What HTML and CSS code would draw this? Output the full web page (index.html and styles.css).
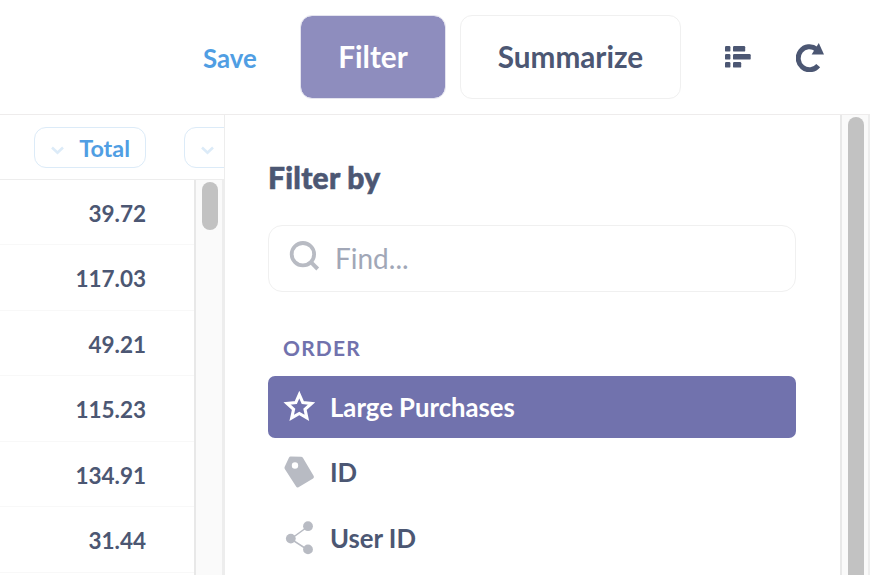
FILE: index.html
```html
<!DOCTYPE html>
<html lang="en">
<head>
<meta charset="utf-8">
<title>Orders</title>
<link rel="stylesheet" href="styles.css">
</head>
<body>
<div class="app">
  <header class="toolbar">
    <a class="save">Save</a>
    <button class="btn btn-filter">Filter</button>
    <button class="btn btn-summarize">Summarize</button>
    <svg class="icon-list" width="26" height="22" viewBox="0 0 26 22" fill="#4c5773">
      <rect x="0" y="0" width="5.4" height="5.6" rx="1.2"/><rect x="8" y="0" width="12.2" height="5.6" rx="1.2"/>
      <rect x="0" y="8" width="5.4" height="5.6" rx="1.2"/><rect x="8" y="8" width="17.7" height="5.6" rx="1.2"/>
      <rect x="0" y="16" width="5.4" height="5.6" rx="1.2"/><rect x="8" y="16" width="8.2" height="5.6" rx="1.2"/>
    </svg>
    <svg class="icon-refresh" width="28" height="29" viewBox="0 0 28 29">
      <path d="M20.5 6.200A11.300 11.500 0 1 0 22.200 22.600" fill="none" stroke="#4c5773" stroke-width="5"/>
      <path d="M22.800 0 28 11.400H15.600Z" fill="#4c5773"/>
    </svg>
  </header>
  <main class="content">
    <section class="table">
      <div class="thead">
        <div class="pill"><svg width="14" height="9" viewBox="0 0 14 9"><path d="M1 1.500 6.500 6.800 12 1.500" fill="none" stroke="#dcebf8" stroke-width="2.600"/></svg><span>Total</span></div>
        <div class="pill pill-cut"><svg width="14" height="9" viewBox="0 0 14 9"><path d="M1 1.500 6.500 6.800 12 1.500" fill="none" stroke="#dcebf8" stroke-width="2.600"/></svg></div>
      </div>
      <div class="tbody">
        <div class="rows">
          <div class="row"><span>39.72</span></div>
          <div class="row"><span>117.03</span></div>
          <div class="row"><span>49.21</span></div>
          <div class="row"><span>115.23</span></div>
          <div class="row"><span>134.91</span></div>
          <div class="row"><span>31.44</span></div>
        </div>
        <div class="scroll"><div class="thumb thumb-short"></div></div>
      </div>
    </section>
    <aside class="panel">
      <h2>Filter by</h2>
      <div class="search">
        <svg width="32" height="32" viewBox="0 0 32 32" fill="none" stroke="#b8bbc3"><circle cx="13.900" cy="13.200" r="11.200" stroke-width="3.800"/><path d="m21.900 21.200 6.800 6.800" stroke-width="4"/></svg>
        <span>Find...</span>
      </div>
      <h3>ORDER</h3>
      <div class="item item-active">
        <svg width="32" height="32" viewBox="0 0 32 32"><path d="m16.300 3.600 3.500 8 8.700.9-6.500 5.800 1.900 8.600L16.300 22.500l-7.600 4.400 1.900-8.600-6.500-5.800 8.700-.9Z" fill="none" stroke="#fff" stroke-width="3.100"/></svg>
        <span>Large Purchases</span>
      </div>
      <div class="item">
        <svg width="32" height="32" viewBox="0 0 32 32"><path fill="#b8bbc3" fill-rule="evenodd" d="M7.600.6 18 .8q1.200 0 1.900 1l10.800 18.200q.8 1.500-.6 2.400l-14.600 8.800q-1.500.8-2.400-.7L1.800 13q-.5-1-.2-2L5.900 1.700Q6.500.6 7.600.6ZM12 6.300a3.200 3.200 0 1 0 0 6.400a3.200 3.200 0 1 0 0-6.400Z"/></svg>
        <span class="label-id">ID</span>
      </div>
      <div class="item">
        <svg width="32" height="34" viewBox="0 0 32 34"><path d="M25 5.500 7.800 18 25 29" fill="none" stroke="#b8bbc3" stroke-width="1.500"/><g fill="#b8bbc3"><circle cx="25" cy="5.200" r="4.900"/><circle cx="7.800" cy="17.600" r="4.900"/><circle cx="25" cy="28.400" r="4.900"/></g></svg>
        <span>User ID</span>
      </div>
    </aside>
    <div class="scroll"><div class="thumb"></div></div>
  </main>
</div>
</body>
</html>
```
FILE: styles.css
```css
* { box-sizing: border-box; }
body { margin: 0; background: #fff; color: #4c5773; font-family: Lato, sans-serif; font-weight: 700; overflow: hidden; }
.app { width: 870px; height: 575px; display: flex; flex-direction: column; overflow: hidden; }
.toolbar { height: 115px; flex: none; display: flex; align-items: center; border-bottom: 1px solid #eeecec; padding-left: 203px; }
.save { color: #509ee3; font-size: 25.8px; width: 97px; padding-top: 1px; }
.btn { height: 84px; border: 1px solid #f0f0f0; border-radius: 12px; font: 700 29.7px Lato, sans-serif; color: #4c5773; background: #fff; padding: 0 0 1px; }
.btn-filter { width: 146px; background: #8e8dbe; color: #fff; margin-right: 14px; border-color: #e4e4ef; background-clip: padding-box; }
.btn-summarize { width: 221px; }
.icon-list { margin-left: 44px; }
.icon-refresh { margin-left: 45px; }
.content { flex: 1; display: flex; min-height: 0; }
.table { width: 225px; flex: none; display: flex; flex-direction: column; border-right: 1px solid #ededed; overflow: hidden; }
.thead { height: 65px; flex: none; display: flex; gap: 38px; padding: 12px 0 0 34px; border-bottom: 1px solid #ededed; }
.pill { width: 112px; height: 41px; flex: none; border: 1px solid #dcebf8; border-radius: 12px; display: flex; align-items: center; justify-content: space-between; padding: 1px 15px 0 16px; color: #509ee3; font-size: 23.4px; }
.pill svg { margin-top: 4px; }
.tbody { flex: 1; display: flex; min-height: 0; }
.rows { width: 194px; flex: none; font-size: 22.5px; margin-top: -0.4px; }
.row { height: 65.5px; display: flex; align-items: center; justify-content: flex-end; padding: 3px 48px 0 0; border-bottom: 1px solid #f8f8f8; }
.scroll { width: 30px; flex: none; background: #fafafa; border-left: 2px solid #e8e8e8; border-right: 2px solid #ededed; padding: 2px 4px 0 6px; }
.thumb { width: 16px; height: 600px; border-radius: 8px; background: #c2c2c2; }
.thumb-short { height: 48px; }
.panel { width: 615px; flex: none; padding: 44px 44px 0 43px; overflow: hidden; }
h2 { margin: 0; font-size: 30px; line-height: 36px; font-weight: 900; letter-spacing: 0.25px; -webkit-text-stroke: 0.6px #4c5773; }
.search { margin-top: 30px; height: 67px; border: 1px solid #f0f0f0; border-radius: 14px; display: flex; align-items: center; gap: 14px; padding-left: 20px; font-size: 28px; font-weight: 400; color: #a1a7b7; }
.search svg { margin-top: -4px; }
.search span { margin-top: -1px; }
h3 { margin: 42px 0 15px 15px; font-size: 21px; line-height: 27px; letter-spacing: 1.2px; color: #7172ad; }
.item { height: 62px; margin-bottom: 3.5px; border-radius: 7px; display: flex; align-items: center; gap: 15px; padding: 0 0 0 15px; font-size: 25.7px; }
.item svg { flex: none; margin-top: -1px; }
.label-id { margin-top: -1px; }
.item-active { background: #7172ad; color: #fff; }
```
